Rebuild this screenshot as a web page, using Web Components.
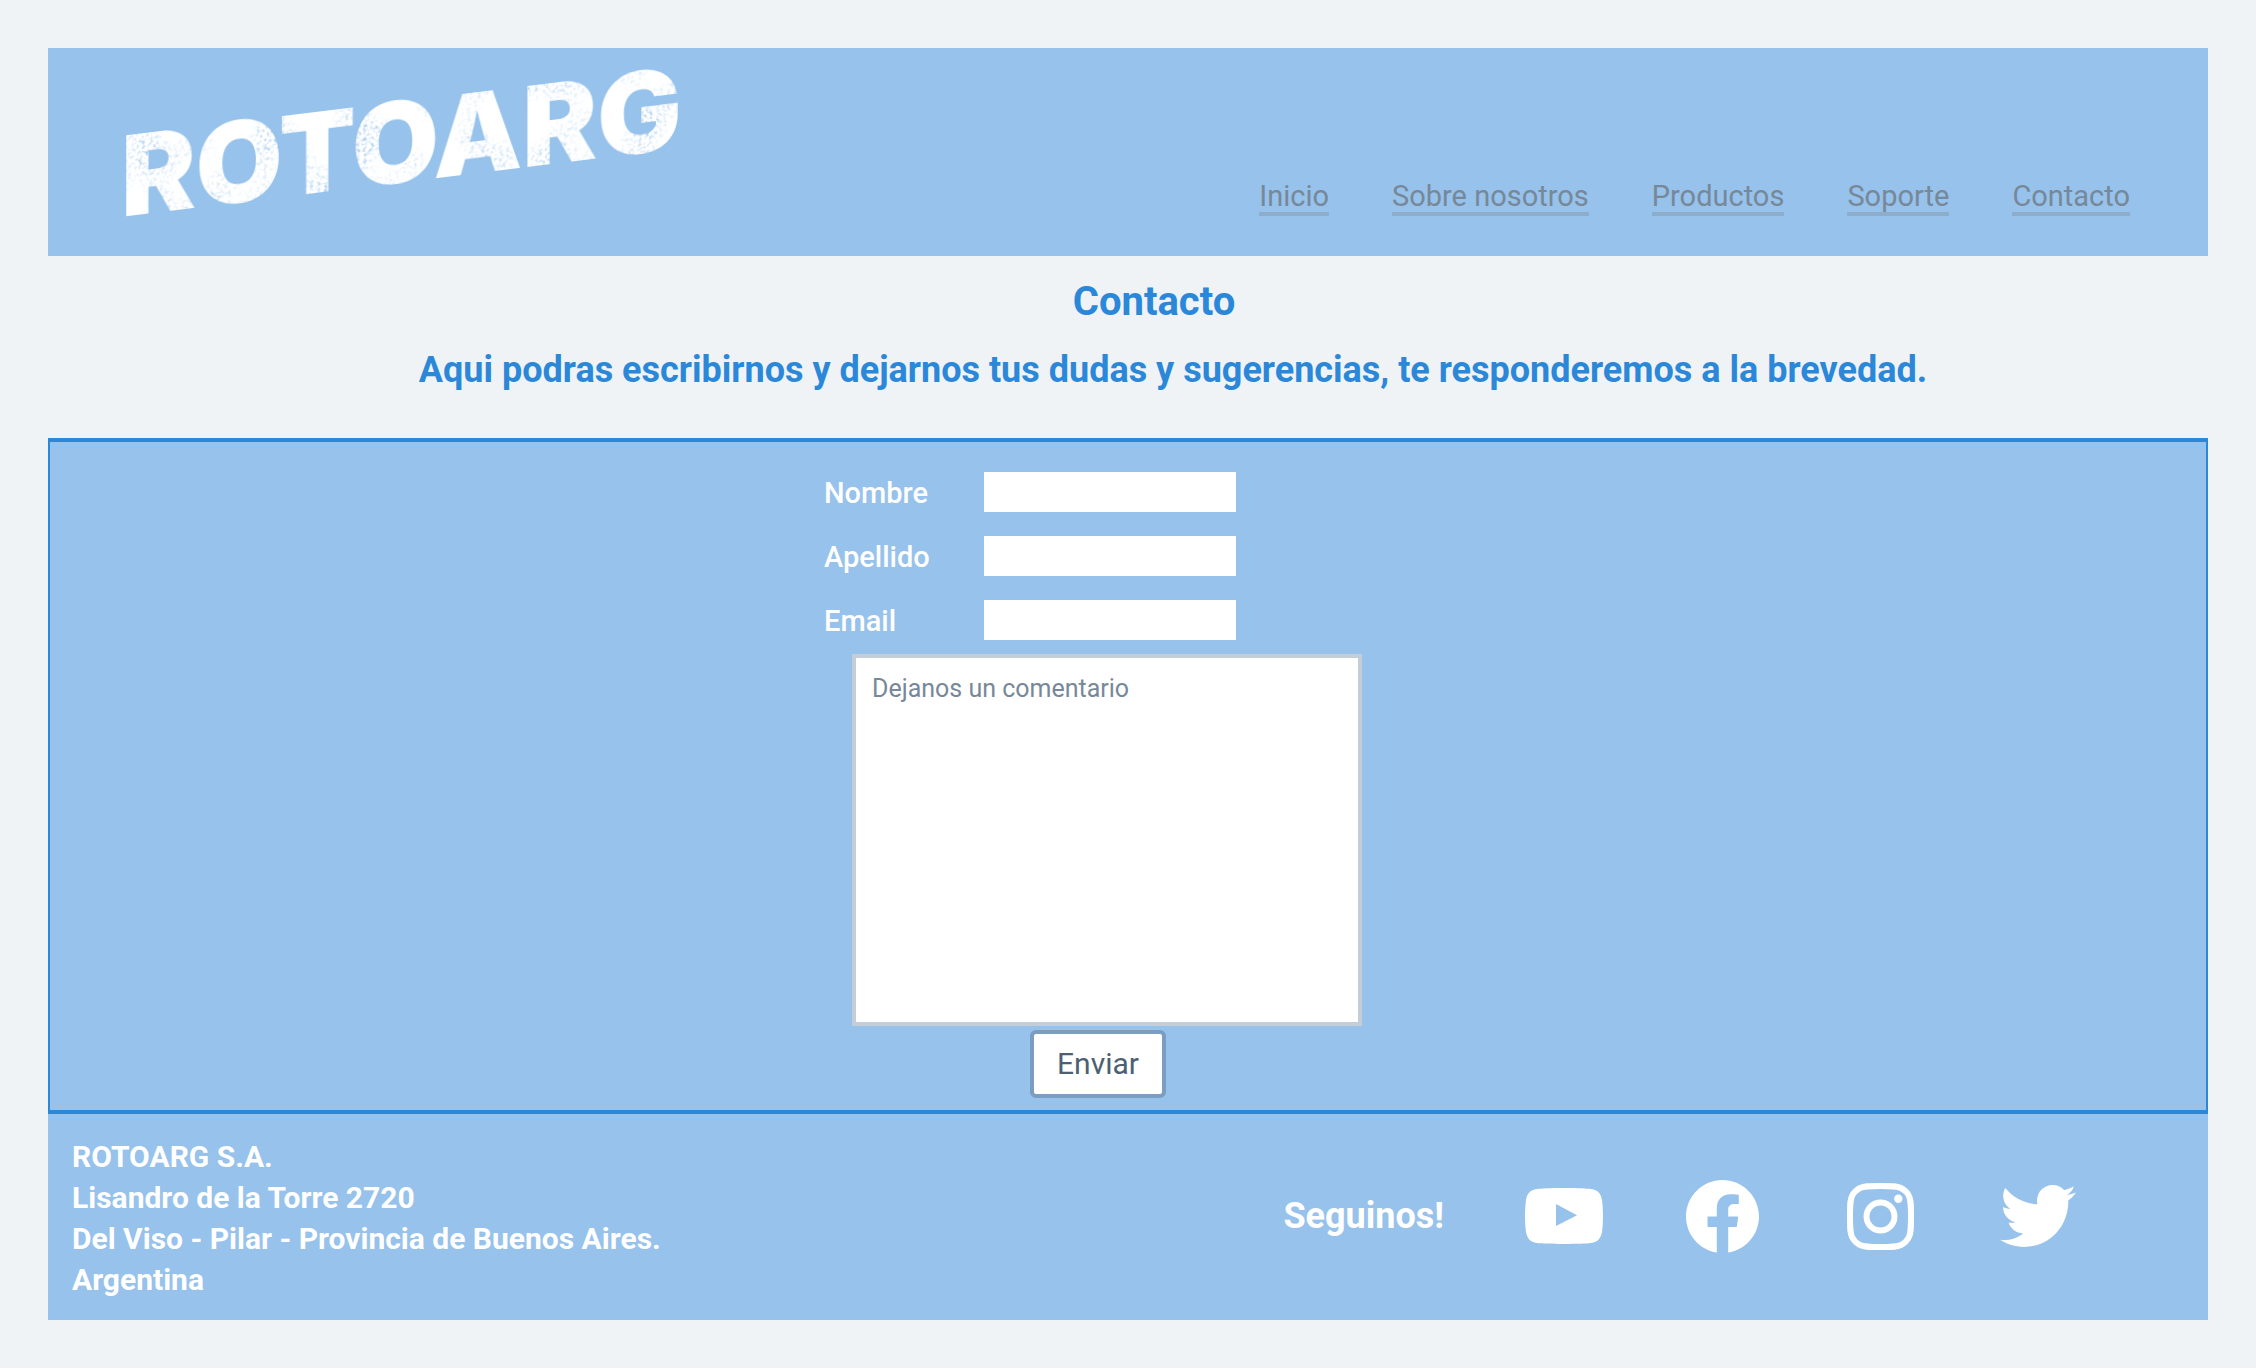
<!DOCTYPE html>
<html lang="es">
<head>
<meta charset="utf-8">
<meta name="viewport" content="width=device-width, initial-scale=1">
<title>RotoArg - Contacto</title>
<style>
  :root {
    --page: #eff3f6;
    --sky: #96c2eb;
    --blue: #2b88d9;
  }
  body {
    margin: 0;
    padding: 48px;
    background: var(--page);
    font-family: Roboto, "Liberation Sans", sans-serif;
    font-size: 30px;
  }
</style>
</head>
<body>
<site-header>
  <nav-link href="#inicio">Inicio</nav-link>
  <nav-link href="#nosotros">Sobre nosotros</nav-link>
  <nav-link href="#productos">Productos</nav-link>
  <nav-link href="#soporte">Soporte</nav-link>
  <nav-link href="#contacto">Contacto</nav-link>
</site-header>
<page-intro>
  <span slot="title">Contacto</span>
  <span slot="lead">Aqui podras escribirnos y dejarnos tus dudas y sugerencias, te responderemos a la brevedad.</span>
</page-intro>
<contact-form></contact-form>
<site-footer>
  <span slot="address">ROTOARG S.A.<br>Lisandro de la Torre 2720<br>Del Viso - Pilar - Provincia de Buenos Aires.<br>Argentina</span>
  <social-link network="youtube"></social-link>
  <social-link network="facebook"></social-link>
  <social-link network="instagram"></social-link>
  <social-link network="twitter"></social-link>
</site-footer>

<script>
const define = (name, render) => customElements.define(name, class extends HTMLElement {
  constructor() {
    super();
    this.attachShadow({ mode: 'open' });
  }
  connectedCallback() {
    this.shadowRoot.innerHTML = render(this);
  }
});

define('brand-logo', () => `
  <style>
    :host { display: block; }
    svg { display: block; overflow: visible; }
    text { font-family: Inter, sans-serif; font-weight: 900; font-size: 112px; fill: #fff; }
  </style>
  <svg width="580" height="152" viewBox="0 0 580 152" role="img" aria-label="ROTOARG">
    <defs>
      <filter id="worn" x="-5%" y="-20%" width="110%" height="140%">
        <feTurbulence type="fractalNoise" baseFrequency="0.28" numOctaves="2" seed="4" result="grain"/>
        <feColorMatrix in="grain" values="0 0 0 0 0  0 0 0 0 0  0 0 0 0 0  0 0 0 3 -1.4" result="specks"/>
        <feTurbulence type="fractalNoise" baseFrequency="0.024" numOctaves="1" seed="9" result="clouds"/>
        <feColorMatrix in="clouds" values="0 0 0 0 0  0 0 0 0 0  0 0 0 0 0  0 3 0 0 -1.3" result="areas"/>
        <feComposite in="specks" in2="areas" operator="in" result="wear"/>
        <feComposite in="SourceGraphic" in2="wear" operator="out"/>
      </filter>
    </defs>
    <text x="-7" y="152" transform="skewY(-7)" filter="url(#worn)">ROTOARG</text>
  </svg>`);

define('nav-link', el => `
  <style>
    :host { display: block; }
    a { display: block; font-size: 29px; line-height: 32px; color: #778899; text-decoration: none; border-bottom: 4px solid #8dadcb; }
  </style>
  <a href="${el.getAttribute('href')}"><slot></slot></a>`);

define('site-header', () => `
  <style>
    :host { display: block; background: var(--sky); }
    header { display: flex; justify-content: space-between; align-items: flex-end; padding: 16px 78px 40px 80px; }
    nav { display: flex; gap: 63px; }
  </style>
  <header><brand-logo></brand-logo><nav><slot></slot></nav></header>`);

define('page-intro', () => `
  <style>
    :host { display: flex; flex-direction: column; gap: 20px; padding: 22px 0 44px; color: var(--blue); text-align: center; }
    h1, h2 { margin: 0; font-weight: 700; line-height: 48px; }
    h1 { font-size: 40px; padding-left: 52px; }
    h2 { font-size: 36px; padding-left: 90px; }
  </style>
  <h1><slot name="title"></slot></h1>
  <h2><slot name="lead"></slot></h2>`);

define('form-field', el => `
  <style>
    :host { display: grid; grid-template-columns: 160px 252px; height: 40px; }
    label { color: #fff; font-size: 29px; font-weight: 500; line-height: 42px; }
    input { box-sizing: border-box; width: 100%; height: 40px; margin: 0; padding: 0 8px; border: 0; border-radius: 0; background: #fff; font: inherit; font-size: 25px; }
  </style>
  <label for="field"><slot></slot></label>
  <input id="field" type="${el.getAttribute('type') || 'text'}">`);

define('contact-form', () => `
  <style>
    :host { display: block; background: var(--sky); border: solid var(--blue); border-width: 4px 2px; padding: 30px 0 12px; }
    form { display: flex; flex-direction: column; align-items: flex-start; width: 608px; margin: 0 auto; }
    .fields { display: grid; gap: 24px; }
    textarea {
      box-sizing: border-box; width: 510px; height: 372px; margin: 14px 0 0 28px; padding: 11px 16px;
      border: 4px solid #c3ced8; border-radius: 0; background: #fff; resize: none;
      font: inherit; font-size: 25px; line-height: 40px; color: #4d6073;
    }
    textarea::placeholder { color: #778899; opacity: 1; }
    button {
      box-sizing: border-box; height: 68px; width: 136px; margin: 4px 0 0 206px; padding: 0 0 2px;
      border: 4px solid #7a9dc1; border-radius: 6px; background: #fff;
      font: inherit; color: #4d6073;
    }
  </style>
  <form>
    <div class="fields">
      <form-field>Nombre</form-field>
      <form-field>Apellido</form-field>
      <form-field type="email">Email</form-field>
    </div>
    <textarea aria-label="Comentario" placeholder="Dejanos un comentario"></textarea>
    <button type="button">Enviar</button>
  </form>`);

const icons = {
  youtube: ['0 0 78 56', 78, 56, '<path fill-rule="evenodd" d="M39 0C54 0 62 .6 66 1C73 1.700 76 6 77 12C78.300 22 78.300 34 77 44C76 50 73 54 66 55C58 56.200 20 56.200 12 55C5 54 2 50 1 44C-.3 34-.3 22 1 12C2 6 5 1.700 12 1C16 .6 24 0 39 0ZM31 16V38L52 27.300Z"/>'],
  facebook: ['2 2 20 20', 73, 73, '<path d="M12.001 2.002c-5.522 0-9.999 4.477-9.999 9.999 0 4.990 3.656 9.126 8.437 9.879v-6.988h-2.540v-2.891h2.540V9.798c0-2.508 1.493-3.891 3.776-3.891 1.094 0 2.240.195 2.240.195v2.459h-1.264c-1.240 0-1.628.772-1.628 1.563v1.875h2.771l-.443 2.891h-2.328v6.988C18.344 21.129 22 16.992 22 12.001c0-5.522-4.477-9.999-9.999-9.999z"/>'],
  instagram: ['0 0 67 67', 67, 67, '<g fill="none" stroke="#fff" stroke-width="6"><path d="M33.500 3C47 3 50 3.200 54 5C58 7 60 9 62 13C63.800 17 64 20 64 33.500S63.800 50 62 54C60 58 58 60 54 62C50 63.800 47 64 33.500 64S17 63.800 13 62C9 60 7 58 5 54C3.200 50 3 47 3 33.500S3.200 17 5 13C7 9 9 7 13 5C17 3.200 20 3 33.500 3Z"/><circle cx="33.500" cy="33.500" r="14"/></g><circle cx="51.300" cy="15.700" r="4.200"/>'],
  twitter: ['1.540 4 20.920 17', 76, 62, '<path d="M22.460 6C21.690 6.350 20.860 6.580 20 6.690C20.880 6.160 21.560 5.320 21.880 4.310C21.050 4.810 20.130 5.160 19.160 5.360C18.370 4.500 17.260 4 16 4C13.650 4 11.730 5.920 11.730 8.290C11.730 8.630 11.770 8.960 11.840 9.270C8.280 9.090 5.110 7.380 3 4.790C2.630 5.420 2.420 6.160 2.420 6.940C2.420 8.430 3.170 9.750 4.330 10.500C3.620 10.500 2.960 10.300 2.380 10V10.030C2.380 12.110 3.860 13.850 5.820 14.240C5.460 14.340 5.080 14.390 4.690 14.390C4.420 14.390 4.150 14.360 3.890 14.310C4.430 16 6 17.260 7.890 17.290C6.430 18.450 4.580 19.130 2.560 19.130C2.220 19.130 1.880 19.110 1.540 19.070C3.440 20.290 5.700 21 8.120 21C16 21 20.330 14.460 20.330 8.790C20.330 8.600 20.330 8.420 20.320 8.230C21.160 7.630 21.880 6.870 22.460 6Z"/>']
};

define('social-link', el => {
  const network = el.getAttribute('network');
  const [box, w, h, shape] = icons[network];
  return `
  <style>
    :host { display: block; }
    a { display: grid; place-items: center; width: 88px; height: 88px; }
    svg { display: block; fill: #fff; }
  </style>
  <a href="#${network}" aria-label="${network}"><svg viewBox="${box}" width="${w}" height="${h}" aria-hidden="true">${shape}</svg></a>`;
});

define('site-footer', () => `
  <style>
    :host { display: block; background: var(--sky); color: #fff; font-weight: 700; }
    footer { display: flex; justify-content: space-between; align-items: center; padding: 22px 126px 20px 24px; }
    address { font-style: normal; line-height: 41px; }
    .follow { display: flex; align-items: center; gap: 70px; padding-bottom: 4px; }
    p { margin: 0 6px 0 0; font-size: 36px; line-height: 50px; }
  </style>
  <footer>
    <address><slot name="address"></slot></address>
    <div class="follow"><p>Seguinos!</p><slot></slot></div>
  </footer>`);
</script>
</body>
</html>
